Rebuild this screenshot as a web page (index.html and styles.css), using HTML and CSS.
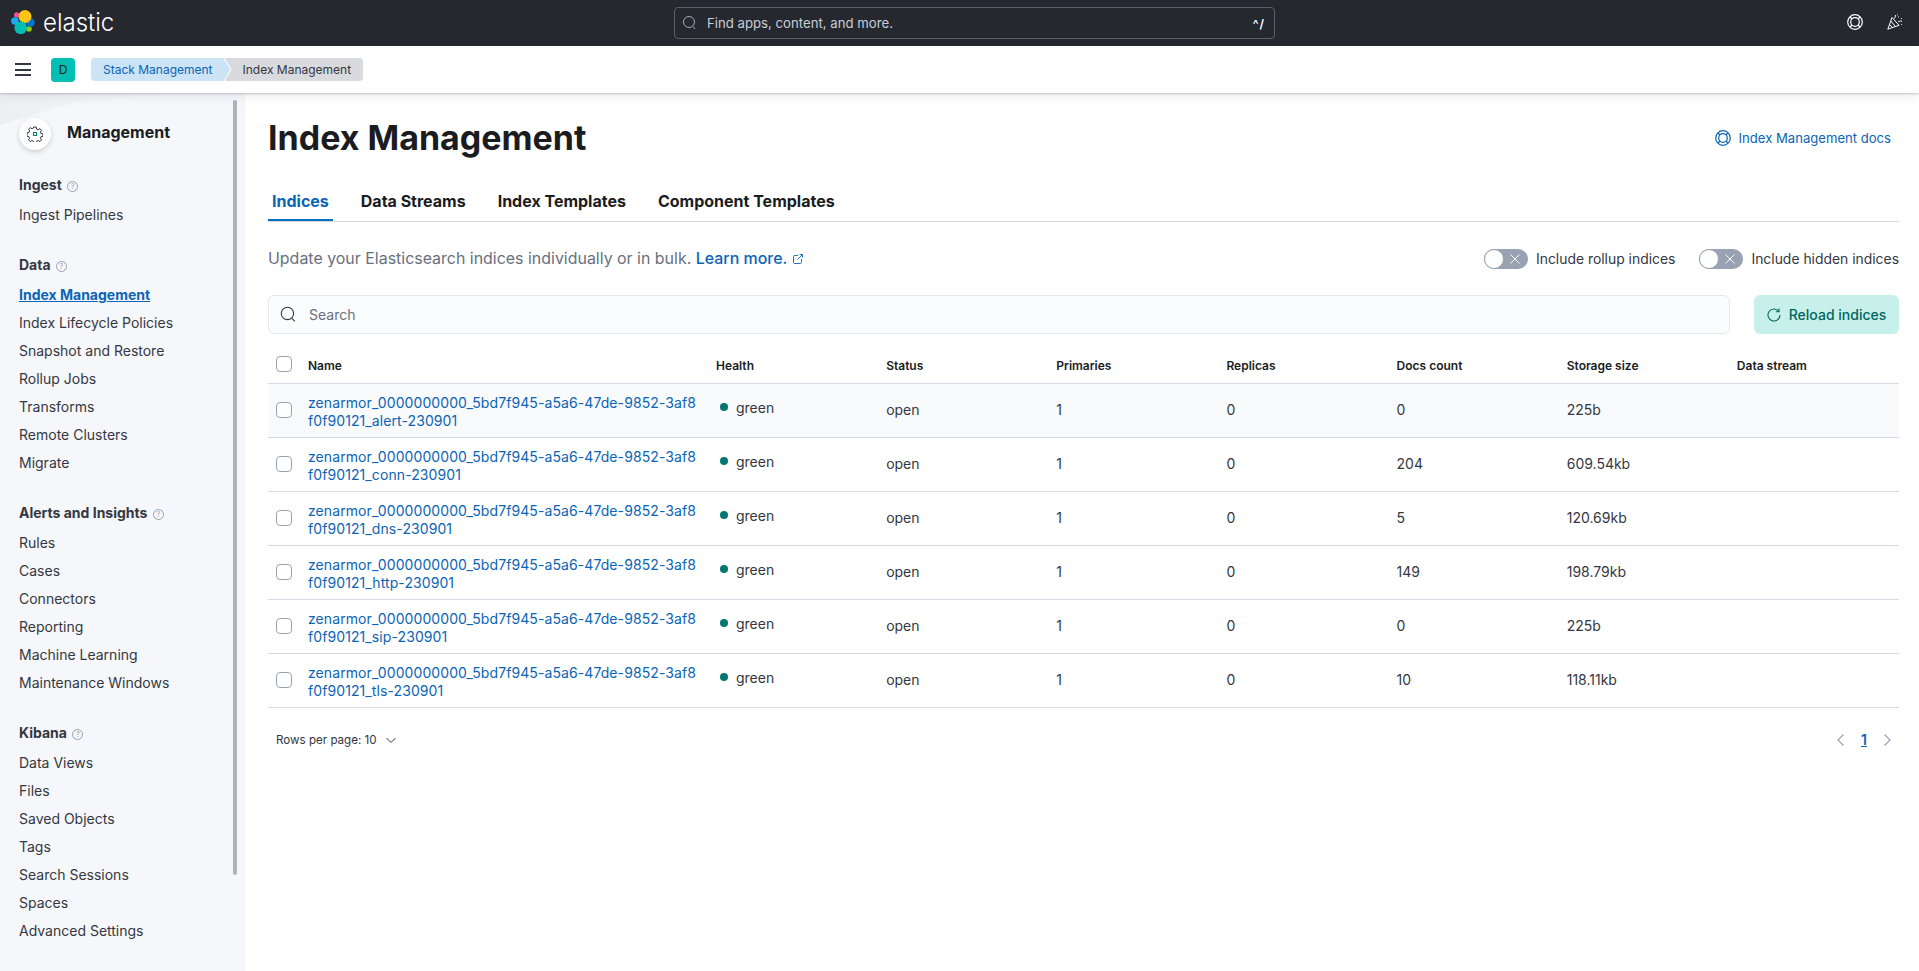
FILE: index.html
```html
<!DOCTYPE html>
<html>

<head>
    <title>Index Management - Elastic</title>
    <link rel="stylesheet" href="styles.css">
</head>

<body>
    <header class="topbar">
        <div class="brand">
            <svg class="logo" width="25" height="25" viewBox="0 0 25 25">
                <circle cx="5.700" cy="5" r="2.700" fill="#f04e98" />
                <circle cx="3.900" cy="11" r="3.800" fill="#1ba9f5" />
                <circle cx="18" cy="19" r="2.800" fill="#93c90e" />
                <circle cx="19.500" cy="12.500" r="4.300" fill="#0077cc" />
                <circle cx="14" cy="6.500" r="6.500" fill="#fec514" />
                <circle cx="9.700" cy="17.700" r="6.300" fill="#00bfb3" />
            </svg>
            <span class="brand-name">elastic</span>
        </div>
        <div class="global-search">
            <svg class="ico" width="16" height="16" viewBox="0 0 16 16" fill="none" stroke="#a2abba">
                <circle cx="7" cy="7" r="5.500" />
                <path d="M11 11.500l2 2.500" />
            </svg>
            <span class="global-search-text">Find apps, content, and more.</span>
            <span class="shortcut">^/</span>
        </div>
        <div class="top-icons">
            <svg width="16" height="16" viewBox="0 0 16 16" fill="none" stroke="#fff" stroke-width="1.200">
                <circle cx="8" cy="8" r="7.300" />
                <circle cx="8" cy="8" r="4.300" />
                <path d="M3 3l2 2M13 3l-2 2M3 13l2-2M13 13l-2-2" />
            </svg>
            <svg width="16" height="16" viewBox="0 0 16 16" fill="none" stroke="#fff">
                <path d="M.8 15.200L5 3.500l7 7.800z" stroke-linejoin="round" />
                <path d="M2.500 10.500l3.500 3.500M3.800 7l5 6" />
                <path d="M7.500 4.500c.5-1 1-2 1-3.500M11 8c1-.8 2-1 4-.8M11.500 2.500v.8M14.500 4v.8M14.500 10v.8M10.500.5v.8" />
            </svg>
        </div>
    </header>

    <div class="subbar">
        <button class="menu-btn" aria-label="menu"><span></span><span></span><span></span></button>
        <span class="avatar">D</span>
        <nav class="crumbs">
            <a class="crumb crumb-first">Stack Management</a>
            <a class="crumb crumb-last">Index Management</a>
        </nav>
    </div>

    <div class="page">
        <aside class="sidenav">
            <div class="sidenav-bg"></div>
            <div class="scroll-thumb"></div>
            <div class="sidenav-head">
                <span class="gear-badge">
                    <svg width="16" height="16" viewBox="0 0 16 16" fill="none" stroke="#343741">
                        <path d="M6.800 1h2.400l.4 2 1.500.7 1.800-1.100 1.600 1.700-1.100 1.700.6 1.500 2 .4v2.400l-2 .4-.6 1.500 1.100 1.700-1.600 1.700-1.800-1.100-1.500.7-.4 2H6.800l-.4-2-1.500-.7-1.800 1.100-1.600-1.700 1.100-1.700-.6-1.500-2-.4V6.900l2-.4.6-1.500-1.100-1.700 1.600-1.700 1.800 1.100 1.500-.7z" />
                        <rect x="6.500" y="6.500" width="3" height="3" stroke="#017d73" />
                    </svg>
                </span>
                <span class="sidenav-title">Management</span>
            </div>

            <div class="nav-group">
                <div class="nav-heading">Ingest <span class="help-dot">?</span></div>
                <a class="nav-item">Ingest Pipelines</a>
            </div>
            <div class="nav-group">
                <div class="nav-heading">Data <span class="help-dot">?</span></div>
                <a class="nav-item active">Index Management</a>
                <a class="nav-item">Index Lifecycle Policies</a>
                <a class="nav-item">Snapshot and Restore</a>
                <a class="nav-item">Rollup Jobs</a>
                <a class="nav-item">Transforms</a>
                <a class="nav-item">Remote Clusters</a>
                <a class="nav-item">Migrate</a>
            </div>
            <div class="nav-group">
                <div class="nav-heading">Alerts and Insights <span class="help-dot">?</span></div>
                <a class="nav-item">Rules</a>
                <a class="nav-item">Cases</a>
                <a class="nav-item">Connectors</a>
                <a class="nav-item">Reporting</a>
                <a class="nav-item">Machine Learning</a>
                <a class="nav-item">Maintenance Windows</a>
            </div>
            <div class="nav-group">
                <div class="nav-heading">Kibana <span class="help-dot">?</span></div>
                <a class="nav-item">Data Views</a>
                <a class="nav-item">Files</a>
                <a class="nav-item">Saved Objects</a>
                <a class="nav-item">Tags</a>
                <a class="nav-item">Search Sessions</a>
                <a class="nav-item">Spaces</a>
                <a class="nav-item">Advanced Settings</a>
            </div>
        </aside>

        <main class="content">
            <div class="title-row">
                <h1>Index Management</h1>
                <a class="docs-link">
                    <svg width="16" height="16" viewBox="0 0 16 16" fill="none" stroke="#0b64b5" stroke-width="1.200">
                        <circle cx="8" cy="8" r="7.300" />
                        <circle cx="8" cy="8" r="4.300" />
                        <path d="M3 3l2 2M13 3l-2 2M3 13l2-2M13 13l-2-2" />
                    </svg>
                    Index Management docs
                </a>
            </div>

            <div class="tabs">
                <a class="tab selected">Indices</a>
                <a class="tab">Data Streams</a>
                <a class="tab">Index Templates</a>
                <a class="tab">Component Templates</a>
            </div>

            <div class="intro-row">
                <p class="intro">Update your Elasticsearch indices individually or in bulk. <a class="learn">Learn more.</a>
                    <svg class="ext" width="12" height="12" viewBox="0 0 12 12" fill="none" stroke="#0b64b5" stroke-width=".9">
                        <path d="M6 2.500H2.500a1 1 0 0 0-1 1v6a1 1 0 0 0 1 1h6a1 1 0 0 0 1-1V6" />
                        <path d="M5.500 6.500L10.500 1.500M7.500 1.500h3v3" />
                    </svg>
                </p>
                <div class="toggles">
                    <label class="toggle">
                        <span class="switch">
                            <span class="knob"></span>
                            <svg width="10" height="10" viewBox="0 0 10 10" stroke="#fff"><path d="M.5.500l9 9M9.500.500l-9 9" /></svg>
                        </span>
                        Include rollup indices
                    </label>
                    <label class="toggle">
                        <span class="switch">
                            <span class="knob"></span>
                            <svg width="10" height="10" viewBox="0 0 10 10" stroke="#fff"><path d="M.5.500l9 9M9.500.500l-9 9" /></svg>
                        </span>
                        Include hidden indices
                    </label>
                </div>
            </div>

            <div class="search-row">
                <div class="search-box">
                    <svg width="17" height="17" viewBox="0 0 16 16" fill="none" stroke="#343741">
                        <circle cx="7" cy="7" r="5.800" />
                        <path d="M11 11.500l3 3" />
                    </svg>
                    <span>Search</span>
                </div>
                <button class="reload">
                    <svg width="14" height="14" viewBox="0 0 14 14" fill="none" stroke="#00665c" stroke-width="1.100">
                        <path d="M11.800 3.400A6 6 0 1 0 13 7" />
                        <path d="M12 .5v3.200H8.800" />
                    </svg>
                    Reload indices
                </button>
            </div>

            <table class="indices">
                <colgroup>
                    <col class="col-check">
                    <col class="col-name">
                </colgroup>
                <thead>
                    <tr>
                        <th class="check"><span class="checkbox"></span></th>
                        <th>Name</th>
                        <th>Health</th>
                        <th>Status</th>
                        <th>Primaries</th>
                        <th>Replicas</th>
                        <th>Docs count</th>
                        <th>Storage size</th>
                        <th>Data stream</th>
                    </tr>
                </thead>
                <tbody>
                    <tr class="hovered">
                        <td class="check"><span class="checkbox"></span></td>
                        <td><a class="index-name">zenarmor_0000000000_5bd7f945-a5a6-47de-9852-3af8f0f90121_alert-230901</a></td>
                        <td><span class="health"><i></i>green</span></td>
                        <td>open</td>
                        <td>1</td>
                        <td>0</td>
                        <td>0</td>
                        <td>225b</td>
                        <td></td>
                    </tr>
                    <tr>
                        <td class="check"><span class="checkbox"></span></td>
                        <td><a class="index-name">zenarmor_0000000000_5bd7f945-a5a6-47de-9852-3af8f0f90121_conn-230901</a></td>
                        <td><span class="health"><i></i>green</span></td>
                        <td>open</td>
                        <td>1</td>
                        <td>0</td>
                        <td>204</td>
                        <td>609.54kb</td>
                        <td></td>
                    </tr>
                    <tr>
                        <td class="check"><span class="checkbox"></span></td>
                        <td><a class="index-name">zenarmor_0000000000_5bd7f945-a5a6-47de-9852-3af8f0f90121_dns-230901</a></td>
                        <td><span class="health"><i></i>green</span></td>
                        <td>open</td>
                        <td>1</td>
                        <td>0</td>
                        <td>5</td>
                        <td>120.69kb</td>
                        <td></td>
                    </tr>
                    <tr>
                        <td class="check"><span class="checkbox"></span></td>
                        <td><a class="index-name">zenarmor_0000000000_5bd7f945-a5a6-47de-9852-3af8f0f90121_http-230901</a></td>
                        <td><span class="health"><i></i>green</span></td>
                        <td>open</td>
                        <td>1</td>
                        <td>0</td>
                        <td>149</td>
                        <td>198.79kb</td>
                        <td></td>
                    </tr>
                    <tr>
                        <td class="check"><span class="checkbox"></span></td>
                        <td><a class="index-name">zenarmor_0000000000_5bd7f945-a5a6-47de-9852-3af8f0f90121_sip-230901</a></td>
                        <td><span class="health"><i></i>green</span></td>
                        <td>open</td>
                        <td>1</td>
                        <td>0</td>
                        <td>0</td>
                        <td>225b</td>
                        <td></td>
                    </tr>
                    <tr>
                        <td class="check"><span class="checkbox"></span></td>
                        <td><a class="index-name">zenarmor_0000000000_5bd7f945-a5a6-47de-9852-3af8f0f90121_tls-230901</a></td>
                        <td><span class="health"><i></i>green</span></td>
                        <td>open</td>
                        <td>1</td>
                        <td>0</td>
                        <td>10</td>
                        <td>118.11kb</td>
                        <td></td>
                    </tr>
                </tbody>
            </table>

            <div class="pager-row">
                <span class="rows-per-page">Rows per page: 10
                    <svg width="12" height="12" viewBox="0 0 12 12" fill="none" stroke="#343741"><path d="M1.500 4l4.500 4.500L10.500 4" /></svg>
                </span>
                <span class="pager">
                    <svg width="12" height="14" viewBox="0 0 12 14" fill="none" stroke="#98a2b3" stroke-width="1.200"><path d="M8.500 1.500L3 7l5.500 5.500" /></svg>
                    <a class="page-num">1</a>
                    <svg width="12" height="14" viewBox="0 0 12 14" fill="none" stroke="#98a2b3" stroke-width="1.200"><path d="M3.500 1.500L9 7l-5.500 5.500" /></svg>
                </span>
            </div>
        </main>
    </div>
</body>
</html>
```

FILE: styles.css
```css
html, body {
    height: 100%;
}

body {
    margin: 0;
    display: flex;
    flex-direction: column;
    overflow: hidden;
    font-family: Inter, 'Liberation Sans', sans-serif;
    font-size: 14px;
    color: #343741;
    background-color: #fff;
}

a {
    color: inherit;
    text-decoration: none;
}

h1, p {
    margin: 0;
}

/* top dark bar */
.topbar {
    position: relative;
    height: 46px;
    flex: none;
    background-color: #25282f;
    display: flex;
    align-items: center;
    justify-content: center;
}

.brand {
    position: absolute;
    left: 11px;
    top: 10px;
    display: flex;
    align-items: center;
    gap: 7px;
}

.brand-name {
    color: #fff;
    font-size: 24px;
    font-weight: 300;
    line-height: 25px;
}

.global-search {
    width: 601px;
    height: 32px;
    margin-left: 30px;
    box-sizing: border-box;
    border: 1px solid #5a5e68;
    border-radius: 4px;
    display: flex;
    align-items: center;
    padding: 0 9px 0 7px;
    color: #c9ced6;
    font-size: 13.200px;
}

.global-search .ico {
    margin-right: 9px;
}

.global-search-text {
    flex: 1;
}

.shortcut {
    color: #fff;
    font-size: 12px;
    font-weight: 600;
    letter-spacing: 1px;
}

.top-icons {
    position: absolute;
    right: 16px;
    top: 14px;
    display: flex;
    align-items: center;
    gap: 24px;
}

/* breadcrumb bar */
.subbar {
    position: relative;
    z-index: 2;
    height: 47px;
    flex: none;
    background-color: #fff;
    box-shadow: 0 1px 2px rgba(52, 55, 65, .25), 0 4px 10px rgba(52, 55, 65, .08);
    display: flex;
    align-items: center;
    padding-left: 15px;
}

.menu-btn {
    width: 16px;
    height: 13px;
    padding: 0;
    border: 0;
    background: none;
    display: flex;
    flex-direction: column;
    justify-content: space-between;
    margin-right: 20px;
}

.menu-btn span {
    display: block;
    height: 2px;
    background-color: #343741;
}

.avatar {
    width: 24px;
    height: 24px;
    border-radius: 4px;
    background-color: #00bfb3;
    color: #1a1c21;
    font-size: 12px;
    text-align: center;
    line-height: 24px;
    margin-right: 16px;
}

.crumbs {
    display: flex;
    font-size: 12px;
    line-height: 23px;
}

.crumb {
    height: 23px;
    display: block;
}

.crumb-first {
    padding: 0 18px 0 12px;
    background-color: #cce4f5;
    color: #0b64b5;
    border-radius: 4px 0 0 4px;
    clip-path: polygon(0 0, calc(100% - 7px) 0, 100% 50%, calc(100% - 7px) 100%, 0 100%);
}

.crumb-last {
    margin-left: -6px;
    padding: 0 12px 0 18px;
    background-color: #d8dadd;
    color: #343741;
    border-radius: 0 4px 4px 0;
    clip-path: polygon(0 0, 100% 0, 100% 100%, 0 100%, 7px 50%);
}

/* page body */
.page {
    flex: 1;
    display: flex;
    min-height: 0;
}

.sidenav {
    position: relative;
    width: 243px;
    flex: none;
    box-sizing: border-box;
    padding: 0 19px;
    background-color: #f5f7fa;
    box-shadow: 1px 0 3px rgba(52, 55, 65, .1);
    overflow: hidden;
}

.sidenav-bg {
    position: absolute;
    left: 0;
    top: 0;
    width: 190px;
    height: 32px;
    background: linear-gradient(to right, #edeff3, #f5f7fa);
    clip-path: polygon(0 0, 100% 0, 40% 28%, 0 100%);
}

.scroll-thumb {
    position: absolute;
    left: 233px;
    top: 7px;
    width: 4px;
    height: 775px;
    border-radius: 2px;
    background-color: #b0b3ba;
}

.sidenav-head {
    position: relative;
    height: 78px;
    display: flex;
    align-items: center;
    gap: 16px;
}

.gear-badge {
    width: 32px;
    height: 32px;
    border-radius: 50%;
    background-color: #fff;
    box-shadow: 0 2px 5px rgba(52, 55, 65, .2);
    display: flex;
    align-items: center;
    justify-content: center;
    margin-top: 4px;
}

.sidenav-title {
    font-size: 16px;
    font-weight: 700;
    color: #1a1c21;
}

.nav-group {
    position: relative;
    margin-bottom: 22px;
}

.nav-heading {
    font-weight: 700;
    line-height: 28px;
    margin-bottom: 2px;
    color: #343741;
}

.help-dot {
    display: inline-block;
    width: 9px;
    height: 9px;
    margin-left: 2px;
    border: 1px solid #98a2b3;
    border-radius: 50%;
    font-size: 7px;
    font-weight: 400;
    line-height: 9px;
    text-align: center;
    color: #98a2b3;
    vertical-align: 1px;
}

.nav-item {
    display: block;
    line-height: 28px;
}

.nav-item.active {
    color: #0b64b5;
    font-weight: 700;
    text-decoration: underline;
}

/* main column */
.content {
    flex: 1;
    min-width: 0;
    padding: 0 20px 0 25px;
}

.title-row {
    height: 88px;
    display: flex;
    align-items: center;
    justify-content: space-between;
    padding-top: 2px;
    box-sizing: border-box;
}

h1 {
    font-size: 34px;
    font-weight: 700;
    line-height: 48px;
    color: #1a1c21;
}

.docs-link {
    display: flex;
    align-items: center;
    gap: 8px;
    padding-right: 8px;
    color: #0b64b5;
    font-size: 13.100px;
}

.tabs {
    display: flex;
    gap: 24px;
    height: 40px;
    border-bottom: 1px solid #d3dae6;
}

.tab {
    padding: 0 4px;
    font-size: 16px;
    font-weight: 700;
    line-height: 41px;
    height: 40px;
    color: #1a1c21;
}

.tab.selected {
    color: #0b64b5;
    box-shadow: inset 0 -2px 0 #0071c2;
}

.intro-row {
    height: 73px;
    display: flex;
    align-items: center;
    justify-content: space-between;
}

.intro {
    font-size: 15.950px;
    color: #69707d;
}

.learn {
    color: #0b64b5;
    font-weight: 500;
}

.ext {
    vertical-align: -1px;
}

.toggles {
    display: flex;
    gap: 24px;
}

.toggle {
    display: flex;
    align-items: center;
    gap: 8px;
    color: #343741;
    font-size: 13.900px;
}

.switch {
    position: relative;
    width: 44px;
    height: 20px;
    border-radius: 10px;
    background-color: #98a2b3;
    display: flex;
    align-items: center;
    justify-content: flex-end;
    padding-right: 8px;
    box-sizing: border-box;
}

.knob {
    position: absolute;
    left: 0;
    top: 0;
    width: 18px;
    height: 18px;
    border: 1px solid #98a2b3;
    border-radius: 50%;
    background-color: #fff;
}

.search-row {
    display: flex;
    gap: 24px;
    height: 39px;
}

.search-box {
    flex: 1;
    display: flex;
    align-items: center;
    gap: 12px;
    padding-left: 11px;
    background-color: #fbfcfd;
    border: 1px solid #e4e7ed;
    border-radius: 6px;
    box-sizing: border-box;
    color: #69707d;
}

.reload {
    width: 145px;
    border: 0;
    border-radius: 6px;
    background-color: #c7f0eb;
    color: #00665c;
    font-family: inherit;
    font-size: 14px;
    font-weight: 500;
    display: flex;
    align-items: center;
    justify-content: center;
    gap: 8px;
}

/* indices table */
.indices {
    width: 100%;
    margin-top: 11px;
    table-layout: fixed;
    border-collapse: collapse;
}

.col-check {
    width: 32px;
}

.col-name {
    width: 408px;
}

.indices th {
    height: 38px;
    padding: 4px 8px 0;
    box-sizing: border-box;
    font-size: 12px;
    font-weight: 600;
    text-align: left;
    color: #1a1c21;
    border-bottom: 1px solid #d3dae6;
}

.indices td {
    height: 54px;
    padding: 0 8px 2px;
    box-sizing: border-box;
    border-bottom: 1px solid #d3dae6;
}

.indices .check {
    padding: 0 8px;
}

.hovered td {
    background-color: #f9fafc;
}

.checkbox {
    display: block;
    width: 16px;
    height: 16px;
    box-sizing: border-box;
    border: 1px solid #98a2b3;
    border-radius: 4px;
    background-color: #fff;
}

.index-name {
    display: block;
    padding-top: 6px;
    color: #0b64b5;
    line-height: 18px;
    letter-spacing: .09px;
    word-break: break-all;
}

.health {
    display: flex;
    align-items: center;
    gap: 8px;
    padding-bottom: 4px;
}

.health i {
    width: 8px;
    height: 8px;
    margin-left: 4px;
    border-radius: 50%;
    background-color: #007871;
}

.pager-row {
    height: 64px;
    display: flex;
    align-items: center;
    justify-content: space-between;
    padding: 0 6px 0 8px;
}

.rows-per-page {
    display: flex;
    align-items: center;
    gap: 8px;
    font-size: 11.600px;
}

.pager {
    display: flex;
    align-items: center;
    gap: 14px;
}

.page-num {
    color: #0b64b5;
    font-size: 14px;
    font-weight: 600;
    text-decoration: underline;
}
```
